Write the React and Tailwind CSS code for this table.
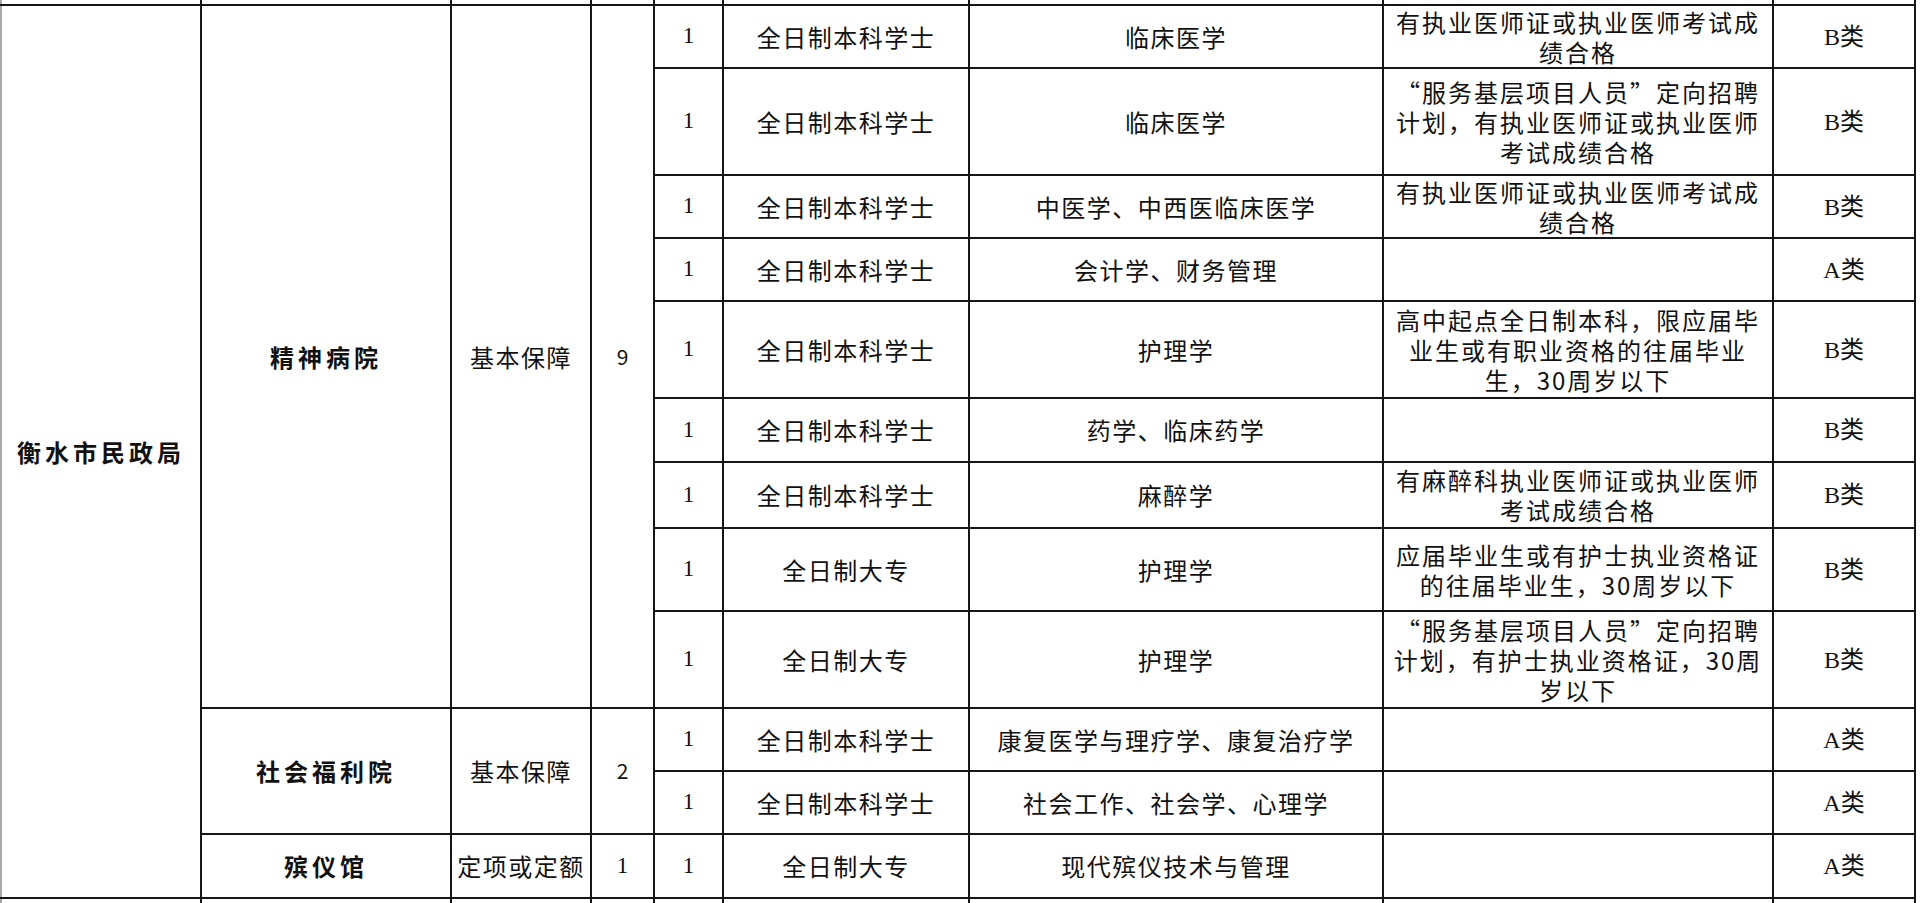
import React from 'react'

// column widths, left to right
const cols = [200, 250, 140, 63, 69, 246, 414, 390, 142]

const posts = [
  { h: 'h-[63px]', edu: '全日制本科学士', major: '临床医学', req: ['有执业医师证或执业医师考试成', '绩合格'], cls: 'B类' },
  { h: 'h-[107px]', edu: '全日制本科学士', major: '临床医学', req: ['“服务基层项目人员”定向招聘', '计划，有执业医师证或执业医师', '考试成绩合格'], cls: 'B类' },
  { h: 'h-[63px]', edu: '全日制本科学士', major: '中医学、中西医临床医学', req: ['有执业医师证或执业医师考试成', '绩合格'], cls: 'B类' },
  { h: 'h-[63px]', edu: '全日制本科学士', major: '会计学、财务管理', req: [], cls: 'A类' },
  { h: 'h-[97px]', edu: '全日制本科学士', major: '护理学', req: ['高中起点全日制本科，限应届毕', '业生或有职业资格的往届毕业', '生，30周岁以下'], cls: 'B类' },
  { h: 'h-[64px]', edu: '全日制本科学士', major: '药学、临床药学', req: [], cls: 'B类' },
  { h: 'h-[66px]', edu: '全日制本科学士', major: '麻醉学', req: ['有麻醉科执业医师证或执业医师', '考试成绩合格'], cls: 'B类' },
  { h: 'h-[83px]', edu: '全日制大专', major: '护理学', req: ['应届毕业生或有护士执业资格证', '的往届毕业生，30周岁以下'], cls: 'B类' },
  { h: 'h-[97px]', edu: '全日制大专', major: '护理学', req: ['“服务基层项目人员”定向招聘', '计划，有护士执业资格证，30周', '岁以下'], cls: 'B类' },
  { h: 'h-[63px]', edu: '全日制本科学士', major: '康复医学与理疗学、康复治疗学', req: [], cls: 'A类' },
  { h: 'h-[63px]', edu: '全日制本科学士', major: '社会工作、社会学、心理学', req: [], cls: 'A类' },
  { h: 'h-[64px]', edu: '全日制大专', major: '现代殡仪技术与管理', req: [], cls: 'A类' },
]

// unit cells that start on a given row index
const units = {
  0: { name: '精神病院', kind: '基本保障', count: '9', span: 9 },
  9: { name: '社会福利院', kind: '基本保障', count: '2', span: 2 },
  11: { name: '殡仪馆', kind: '定项或定额', count: '1', span: 1, serifCount: true },
}

function Td({ className = '', children, ...rest }) {
  return (
    <td className={`border-2 border-[#161616] p-0 text-center align-middle whitespace-nowrap ${className}`} {...rest}>
      {children}
    </td>
  )
}

function StripRow({ edge }) {
  return (
    <tr className="h-[5px]">
      {cols.map((_, i) => (
        <Td key={i} className={`${edge} ${i === 0 ? 'border-l-[#a9a9a9]' : ''}`} />
      ))}
    </tr>
  )
}

export default function App() {
  return (
    <div className="w-[1920px] h-[903px] overflow-hidden bg-white">
      <table className="table-fixed w-[1914px] border-collapse font-['Noto_Sans_CJK_SC',sans-serif] text-[24px] text-[#111]">
        <colgroup>
          {cols.map((w, i) => (
            <col key={i} style={{ width: w }} />
          ))}
        </colgroup>
        <tbody>
          <StripRow edge="border-t-0" />
          {posts.map((p, i) => {
            const unit = units[i]
            return (
              <tr key={i} className={p.h}>
                {i === 0 && (
                  <Td rowSpan={12} className="border-l-[#a9a9a9] font-bold tracking-[4px] leading-[30px]">
                    衡水市民政局
                  </Td>
                )}
                {unit && (
                  <>
                    <Td rowSpan={unit.span} className="font-bold tracking-[4px] leading-[30px]">
                      {unit.name}
                    </Td>
                    <Td rowSpan={unit.span} className="tracking-[1.5px] leading-[30px]">
                      {unit.kind}
                    </Td>
                    <Td
                      rowSpan={unit.span}
                      className={unit.serifCount ? "font-['Liberation_Serif',serif] text-[23px]" : 'text-[21px]'}
                    >
                      {unit.count}
                    </Td>
                  </>
                )}
                <Td className="font-['Liberation_Serif',serif] text-[23px]">1</Td>
                <Td className="tracking-[1.5px] leading-[30px]">{p.edu}</Td>
                <Td className="tracking-[1.5px] leading-[30px]">{p.major}</Td>
                <Td className="tracking-[2px] leading-[30px]">
                  {p.req.map((line, j) => (
                    <div key={j}>{line}</div>
                  ))}
                </Td>
                <Td className="font-['Liberation_Serif','Noto_Sans_CJK_SC',serif] leading-[30px]">{p.cls}</Td>
              </tr>
            )
          })}
          <StripRow edge="border-b-0" />
        </tbody>
      </table>
    </div>
  )
}
